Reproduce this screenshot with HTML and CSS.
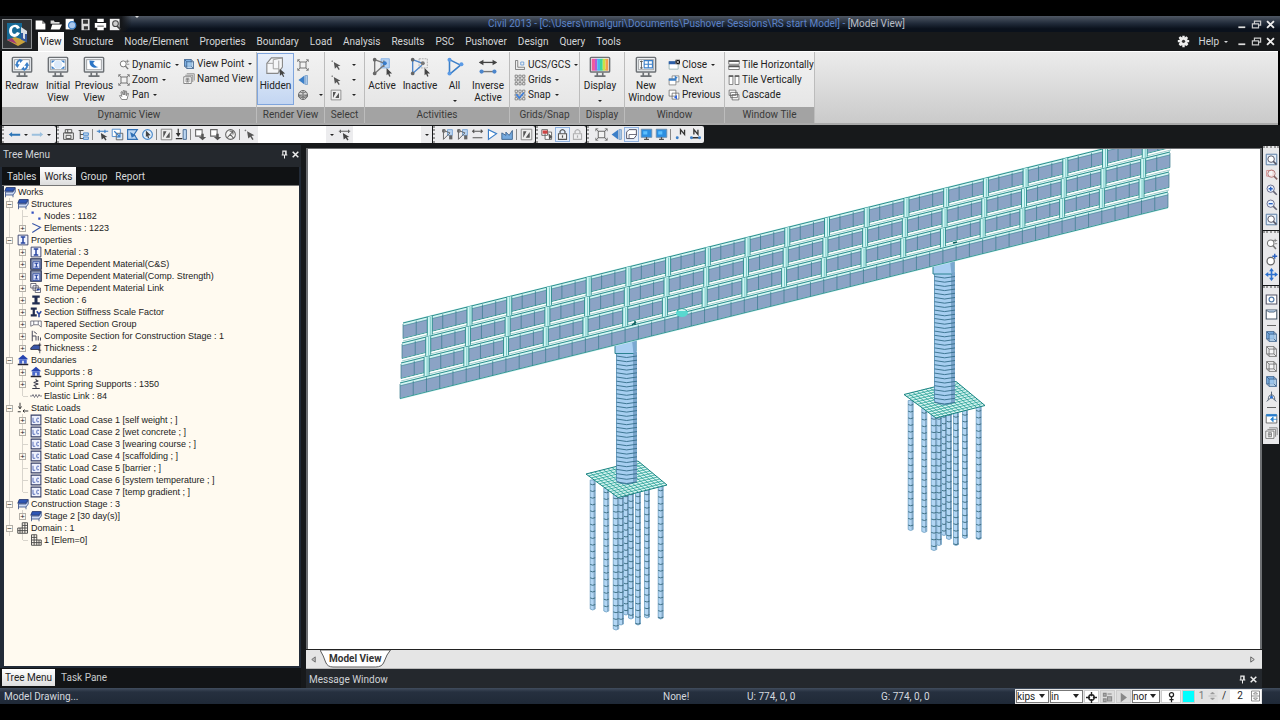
FILE: index.html
```html
<!DOCTYPE html>
<html lang="en">
<head>
<meta charset="utf-8">
<title>Civil 2013 - Model View</title>
<link rel="stylesheet" href="styles.css">
</head>
<body>
<svg class="defs" aria-hidden="true">
  <symbol id="mon" viewBox="0 0 24 24"><rect x="1.500" y="1.500" width="21" height="16" rx="1" fill="#eef1f4" stroke="#6c7074" stroke-width="1.600"/><rect x="4" y="4" width="16" height="11" fill="#fff" stroke="#9a9da0"/><path d="M9 18v3M15 18v3M6 22h12" stroke="#6c7074" stroke-width="1.800" fill="none"/></symbol>
  <symbol id="redraw" viewBox="0 0 24 24"><use href="#mon"/><path d="M10 4.500q-4 1-3.500 5.500M14 15q4-1 3.500-5.500" stroke="#3b7fc8" stroke-width="2" fill="none"/><path d="M4 9h5.500L7 13zM14.500 10.500h5.500L17.500 6.500zM9 3l4 1.500-3 3zM15 16l-4-1.500 3-3z" fill="#3b7fc8"/></symbol>
  <symbol id="initial" viewBox="0 0 24 24"><use href="#mon"/><circle cx="12" cy="9.500" r="4.500" fill="#dbeafb"/><path d="M5 8V5h4zM15 5h4v3zM5 11v3h4zM19 11v3h-4z" fill="#3b7fc8"/></symbol>
  <symbol id="previous" viewBox="0 0 24 24"><use href="#mon"/><path d="M7 5l6 .5-2 2q2 4 6 4.500-7 2.500-9.500-3z" fill="#2d76c6"/></symbol>
  <symbol id="display" viewBox="0 0 24 24"><use href="#mon"/><path d="M3 3h3.500v13H3z" fill="#f15a9c"/><path d="M6.500 3H9v13H6.500z" fill="#b45bd8"/><path d="M9 3h3v13H9z" fill="#45b8ee"/><path d="M12 3h3v13h-3z" fill="#3fd59a"/><path d="M15 3h3v13h-3z" fill="#c9e344"/><path d="M18 3h3v13h-3z" fill="#f5a04c"/></symbol>
  <symbol id="newwin" viewBox="0 0 24 24"><use href="#mon"/><path d="M10 5h9v8h-9zM10 9h9M14.500 5v8" fill="#fff" stroke="#3b7fc8" stroke-width="1.200"/><path d="M7 5v9M5.500 6h3M5.500 13h3" stroke="#555" fill="none"/></symbol>
  <symbol id="hidden" viewBox="0 0 24 24"><path d="M2 8l5-6h12v10l-5 7H2z" fill="#f5f6f8" stroke="#888" stroke-width="1.200"/><path d="M2 8h7v6h6M9 8V4l10-2M15 14v5M15 5v9" fill="none" stroke="#999"/><path d="M16 14l6 5-2.500.4 1.500 3-1.200.6-1.500-3-2 1.500z" fill="#444"/></symbol>
  <symbol id="active" viewBox="0 0 24 24"><path d="M11 3h9v10h-9z" fill="#b8d4f4" stroke="#82b0e4"/><path d="M4 3v16M4 4l11 4M4 19l10-9M14 5v7" stroke="#777" stroke-width="1.500" fill="none"/><circle cx="4" cy="4" r="2" fill="#666"/><circle cx="4" cy="19" r="2" fill="#666"/><circle cx="15" cy="8" r="2.200" fill="#377bca"/><path d="M17 13l6 6-3 .2 1.300 3-1.300.5-1.400-3-1.600 1.400z" fill="#444"/></symbol>
  <symbol id="inactive" viewBox="0 0 24 24"><path d="M11 3h9v10h-9z" fill="#eee" stroke="#aaa" stroke-dasharray="2 1"/><path d="M4 4v15M4 4l11 4M4 19l10-9" stroke="#4c86cc" stroke-width="1.500" fill="none"/><circle cx="4" cy="4" r="2" fill="#666"/><circle cx="4" cy="19" r="2" fill="#666"/><circle cx="15" cy="8" r="2.200" fill="#777"/><path d="M17 13l6 6-3 .2 1.300 3-1.300.5-1.400-3-1.600 1.400z" fill="#444"/></symbol>
  <symbol id="all" viewBox="0 0 24 24"><path d="M6 4v16M6 4l12 6M6 20L18 10" stroke="#3b7fc8" stroke-width="1.700" fill="none"/><g fill="#5b9be6"><circle cx="6" cy="4" r="2.200"/><circle cx="6" cy="19" r="2.200"/><circle cx="19" cy="9" r="2.200"/></g></symbol>
  <symbol id="inverse" viewBox="0 0 24 24"><path d="M3 7h18" stroke="#444" stroke-width="1.400"/><path d="M2 7l5-3v6zM22 7l-5-3v6z" fill="#444"/><path d="M4 17h16" stroke="#777" stroke-width="1.500"/><circle cx="5" cy="17" r="2.300" fill="#4c86cc"/><circle cx="19" cy="17" r="2.300" fill="#4c86cc"/></symbol>

  <symbol id="mag" viewBox="0 0 16 16"><circle cx="7" cy="6.500" r="4" fill="#fff" stroke="#777" stroke-width="1.300"/><path d="M10 9.500l3.500 4" stroke="#777" stroke-width="2"/></symbol>
  <symbol id="dyn" viewBox="0 0 16 16"><use href="#mag"/><path d="M10 3h5M12.500 1v4M12 7h3" stroke="#777"/></symbol>
  <symbol id="corners" viewBox="0 0 16 16"><rect x="4" y="4" width="8" height="8" fill="#f2f2f2" stroke="#666" stroke-width="1.200"/><path d="M1 1l3 3M15 1l-3 3M1 15l3-3M15 15l-3-3M1 4V1h3M12 1h3v3M1 12v3h3M12 15h3v-3" fill="none" stroke="#666"/></symbol>
  <symbol id="hand" viewBox="0 0 16 16"><path d="M5 14L2 9l1-1 2 2-1-6 1.500-.5L7 8V2h1.500l.5 6 1-5.500 1.500.5L11 9l2-3.500 1 .5-2 8z" fill="#fff" stroke="#666"/></symbol>
  <symbol id="cube" viewBox="0 0 16 16"><path d="M2 2h9v9H2z" fill="#7db0e2" stroke="#345a86"/><path d="M5 5h9v9H5z" fill="#a9ceef" fill-opacity=".7" stroke="#345a86"/><path d="M2 2l3 3M11 2l3 3M2 11l3 3M11 11l3 3" stroke="#345a86"/></symbol>
  <symbol id="cubew" viewBox="0 0 16 16"><path d="M2 2h9v9H2zM5 5h9v9H5zM2 2l3 3M11 2l3 3M2 11l3 3M11 11l3 3" fill="#fff" fill-opacity=".6" stroke="#666"/></symbol>
  <symbol id="hid" viewBox="0 0 16 16"><path d="M2 13V5l3-3h9v7l-3 4z" fill="#fff" stroke="#556" stroke-width="1.200"/><path d="M5 13V8h9" fill="none" stroke="#556"/></symbol>
  <symbol id="named" viewBox="0 0 16 16"><path d="M5 1h10v9M3 3h10v9" fill="none" stroke="#777"/><path d="M1 5h10v9H1z" fill="#fff" stroke="#666"/><path d="M4 7h4v5H4zM6 7v5M4 9h4" fill="none" stroke="#777"/></symbol>
  <symbol id="persp" viewBox="0 0 16 16"><path d="M2 8l8-6v12z" fill="#3b7fc8"/><path d="M11 2h3v12h-3z" fill="#a9c9ec" stroke="#7399c2"/></symbol>
  <symbol id="globe" viewBox="0 0 16 16"><circle cx="8" cy="8" r="6" fill="#ddd" stroke="#666" stroke-width="1.300"/><path d="M2 8q6 4 12 0M8 2v12M4 4q4 3 8 0M2 8h12v2q-6 4-12 0z" stroke="#666" fill="#999" fill-opacity=".5"/></symbol>
  <symbol id="ptr" viewBox="0 0 16 16"><path d="M2 3h2M3 2v2" stroke="#777"/><path d="M5 4l9 5-3.500.8 2.500 4-1.500.9-2.500-4L6.500 13z" fill="#555"/></symbol>
  <symbol id="selwin" viewBox="0 0 16 16"><path d="M1.500 1.500h13v13h-13z" fill="#eee" stroke="#777"/><path d="M4 4h4L4 12zM12 12V5l-5 7z" fill="#555"/></symbol>
  <symbol id="ucs" viewBox="0 0 16 16"><path d="M2 2h3v9h9v3H2z" fill="#eee" stroke="#666"/><path d="M9 4h4v4H9z" fill="none" stroke="#5b93d4"/></symbol>
  <symbol id="grid" viewBox="0 0 16 16"><path d="M1.500 1.500h3v3h-3zM6.500 1.500h3v3h-3zM11.500 1.500h3v3h-3zM1.500 6.500h3v3h-3zM6.500 6.500h3v3h-3zM11.500 6.500h3v3h-3zM1.500 11.500h3v3h-3zM6.500 11.500h3v3h-3zM11.500 11.500h3v3h-3z" fill="#fff" stroke="#666"/></symbol>
  <symbol id="snap" viewBox="0 0 16 16"><use href="#grid"/><path d="M3 7l4 5 6-7" stroke="#3b7fe0" stroke-width="2" fill="none"/></symbol>
  <symbol id="wclose" viewBox="0 0 16 16"><path d="M1.500 3.500h12v10h-12z" fill="#fff" stroke="#8aa"/><path d="M1 3h9v4H1z" fill="#2d5fa8"/><path d="M10 1h6v6h-6z" fill="#111"/><path d="M11 2l4 4M15 2l-4 4" stroke="#fff"/></symbol>
  <symbol id="wnext" viewBox="0 0 16 16"><path d="M5.500 2.500h9v8h-9z" fill="#fff" stroke="#777"/><path d="M1.500 6.500h9v8h-9z" fill="#fff" stroke="#777"/><path d="M1 6h10v3H1zM9 2l4 3-4 3z" fill="#3b7fc8"/></symbol>
  <symbol id="wprev" viewBox="0 0 16 16"><path d="M1.500 1.500h9v8h-9zM5.500 5.500h9v8h-9z" fill="#fff" stroke="#666"/><path d="M12 8v6l-4-3z" fill="#2d62e0"/></symbol>
  <symbol id="tileh" viewBox="0 0 16 16"><path d="M1 2h14v5H1zM1 9h14v5H1z" fill="#fff" stroke="#555"/><path d="M1 3h14M1 10h14" stroke="#555" stroke-width="2"/></symbol>
  <symbol id="tilev" viewBox="0 0 16 16"><path d="M1.500 2h5v12h-5zM9.500 2h5v12h-5z" fill="#fff" stroke="#666"/><path d="M1 3h6M9 3h6" stroke="#666" stroke-width="2"/></symbol>
  <symbol id="cascade" viewBox="0 0 16 16"><path d="M1.500 1.500h9v7h-9zM3.500 4.500h9v7h-9zM5.500 7.500h9v7h-9z" fill="#fff" stroke="#555"/></symbol>

  <symbol id="file" viewBox="0 0 16 16"><path d="M2 3h8l4 4v7H2z" fill="#fff"/><path d="M10 3v4h4z" fill="#888"/></symbol>
  <symbol id="folder" viewBox="0 0 16 16"><path d="M2 3h4l1 2h6v2H2z" fill="#ddd"/><path d="M4 8h12l-3 6H2z" fill="#fff"/></symbol>
  <symbol id="recent" viewBox="0 0 16 16"><path d="M2 1h10v13H2z" fill="#fff"/><circle cx="10" cy="9" r="4.500" fill="#aac7ec" stroke="#3b7fc8" stroke-width="1.500"/></symbol>
  <symbol id="save" viewBox="0 0 16 16"><path d="M3 1h10v14H3z" fill="#ddd"/><path d="M5 2h6v5H5zM6 10h5v4H6z" fill="#333"/></symbol>
  <symbol id="print" viewBox="0 0 16 16"><path d="M4 1h8v4H4zM1 6h14v6H1zM4 10h8v5H4z" fill="#fff"/><path d="M4 10h8" stroke="#222"/></symbol>
  <symbol id="preview" viewBox="0 0 16 16"><path d="M1 1h12v14H1z" fill="#eee"/><circle cx="8" cy="7" r="3.500" fill="#ccc" stroke="#444" stroke-width="1.300"/><path d="M10 10l4 4" stroke="#444" stroke-width="2"/></symbol>
  <symbol id="gear" viewBox="0 0 16 16"><path d="M6.500 1h3v2l2-1.500 2 2L12.500 6H15v3h-2.500l1.500 2.500-2 2L9.500 12.500V15h-3v-2.500L4 13.500l-2-2L3.500 9H1V6h2.500L2 3.500l2-2L6.500 3z" fill="#eee"/><circle cx="8" cy="7.700" r="2" fill="#333"/></symbol>
  <symbol id="min" viewBox="0 0 16 16"><path d="M2 12h10" stroke="#ddd" stroke-width="2.500"/></symbol>
  <symbol id="rest" viewBox="0 0 16 16"><path d="M5 6V3h9v6h-3M2 7h9v6H2z" fill="none" stroke="#ccc" stroke-width="1.700"/></symbol>
  <symbol id="x" viewBox="0 0 16 16"><path d="M3 3l10 10M13 3L3 13" stroke="#eee" stroke-width="2.700"/></symbol>
  <symbol id="pin" viewBox="0 0 16 16"><path d="M5 2h6v7H5zM3 9h10M8 9v6M10 2v7" fill="none" stroke="#eee" stroke-width="1.800"/></symbol>

  <symbol id="back" viewBox="0 0 16 16"><path d="M1 8l4-3v2h10v2.500H5V11z" fill="#2d76b8"/></symbol>
  <symbol id="fwd" viewBox="0 0 16 16"><path d="M15 8l-4-3v2H1v2.500h10V11z" fill="#9cc0de"/></symbol>
  <symbol id="s1" viewBox="0 0 16 16"><path d="M2 6h12v8H2zM4 2h8v4H4zM5 9h6v4H5zM7 2v4" fill="#eee" stroke="#555" stroke-width="1.200"/></symbol>
  <symbol id="s2" viewBox="0 0 16 16"><path d="M2 3h6M4 3v10h4M4 8h4" fill="none" stroke="#555" stroke-width="1.300"/><path d="M8 6h6v3H8zM8 11h6v3H8z" fill="#bcd6f2" stroke="#3b7fc8"/></symbol>
  <symbol id="s3" viewBox="0 0 16 16"><path d="M1 4h14M4 2v4M11 2v4" stroke="#3b7fc8" stroke-width="1.400"/><path d="M6 6l8 5-3 .5 2 3-1.500.8-2-3L7 14z" fill="#444"/></symbol>
  <symbol id="s3k" viewBox="0 0 16 16"><path d="M1 4h14M3 2v4M13 2v4" stroke="#666" stroke-width="1.400"/><path d="M6 6l8 5-3 .5 2 3-1.500.8-2-3L7 14z" fill="#444"/></symbol>
  <symbol id="s4" viewBox="0 0 16 16"><path d="M1.500 1.500h10v9h-10z" fill="#fff" stroke="#3b7fc8"/><path d="M6.500 6.500h8v8h-8z" fill="#d9e8f8" stroke="#555"/><path d="M4 4l7 7M11 7v4H7" stroke="#3b7fc8" stroke-width="1.500" fill="none"/></symbol>
  <symbol id="s5" viewBox="0 0 16 16"><path d="M2 2h12l-4 6 4 6H2z" fill="#bcd6f2" stroke="#3170b5" stroke-width="1.400"/><path d="M5 5l7 4-5 3z" fill="#3170b5"/></symbol>
  <symbol id="s6" viewBox="0 0 16 16"><circle cx="8" cy="8" r="6" fill="#e5f0fb" stroke="#4b8acb" stroke-width="1.400"/><path d="M6 3l6 6-3 .3 1 3-1.300.4-1.200-3L6 11z" fill="#444"/></symbol>
  <symbol id="s7" viewBox="0 0 16 16"><path d="M4 1v7M1 13h8" stroke="#333" stroke-width="1.500"/><path d="M1 6h6l-3 5z" fill="#333"/><path d="M10 2h4v12h-4z" fill="#bcd6f2" stroke="#345a86"/></symbol>
  <symbol id="s8" viewBox="0 0 16 16"><path d="M2 2h8v8H2z" fill="#fff" stroke="#666" stroke-width="1.300"/><path d="M9 7h3v4h3l-4.500 4L6 11h3z" fill="#555"/></symbol>
  <symbol id="s9" viewBox="0 0 16 16"><circle cx="8" cy="8" r="6" fill="#f4f4f4" stroke="#666" stroke-width="1.300"/><path d="M4 12l7-8M7 4h4v4M8 8l4 5" stroke="#666" stroke-width="1.400" fill="none"/></symbol>
  <symbol id="a1" viewBox="0 0 16 16"><path d="M8 2h6v7H8z" fill="#bcd6f2" stroke="#6c9dd2"/><path d="M3 2v12M3 3l8 3-8 8M2 2h3v3H2z" fill="none" stroke="#666" stroke-width="1.200"/><path d="M10 9h4v5h-4z" fill="#666"/></symbol>
  <symbol id="a3" viewBox="0 0 16 16"><path d="M2 4h12M4 2L2 4l2 2M12 2l2 2-2 2M2 12h12" fill="none" stroke="#555" stroke-width="1.400"/></symbol>
  <symbol id="a4" viewBox="0 0 16 16"><path d="M3 2v12L13 7z" fill="#fff" stroke="#3b7fc8" stroke-width="1.400"/></symbol>
  <symbol id="a5" viewBox="0 0 16 16"><path d="M1 14V6l5 3V5l4 4 4-6v11z" fill="#75a9de" stroke="#345a86"/></symbol>
  <symbol id="a6" viewBox="0 0 16 16"><path d="M1 2h7v7H1zM5 5h8v9H5z" fill="#fff" stroke="#555"/><path d="M2 3h6v4H2z" fill="#d04444"/><path d="M9 6l5 5-4 3z" fill="#555"/></symbol>
  <symbol id="lock" viewBox="0 0 16 16"><path d="M5 7V4q3-4 6 0v3" fill="none" stroke="#555" stroke-width="1.500"/><path d="M3 7h10v7H3z" fill="#f3f3f3" stroke="#555" stroke-width="1.300"/><path d="M8 9v3" stroke="#555" stroke-width="1.500"/></symbol>
  <symbol id="scr" viewBox="0 0 16 16"><path d="M1.500 1.500h13v10h-13z" fill="#2c8ee0" stroke="#6f8ca8"/><path d="M5 14h6M8 11v3" stroke="#555" stroke-width="1.500"/><path d="M4 4h5v4H4z" fill="#5cc0ff"/></symbol>
  <symbol id="nodeN" viewBox="0 0 16 16"><path d="M8 8V2l5 6V2" fill="none" stroke="#333" stroke-width="1.600"/><circle cx="4" cy="12" r="1.800" fill="#3b7fc8"/></symbol>
  <symbol id="elemN" viewBox="0 0 16 16"><path d="M6 8V2l5 6V2M3 12h10" fill="none" stroke="#333" stroke-width="1.600"/><circle cx="3" cy="12" r="1.800" fill="#3b7fc8"/><circle cx="13" cy="12" r="1.800" fill="#3b7fc8"/></symbol>

  <symbol id="zfit" viewBox="0 0 16 16"><path d="M1.500 1.500h13v13h-13z" fill="#e2ecf7" stroke="#5c7ea6" stroke-width="1.200"/><circle cx="7.500" cy="7.500" r="4" fill="#fff" stroke="#556" stroke-width="1.200"/><path d="M10 10l4 4" stroke="#556" stroke-width="1.800"/></symbol>
  <symbol id="zwin" viewBox="0 0 16 16"><path d="M2 3h8v7H2z" fill="none" stroke="#d08080"/><circle cx="8" cy="7" r="4.500" fill="#fff" fill-opacity=".5" stroke="#a66"/><path d="M11 10l4 4" stroke="#866" stroke-width="2"/></symbol>
  <symbol id="zin" viewBox="0 0 16 16"><circle cx="7" cy="7" r="4.500" fill="#eaf3ff" stroke="#557"/><path d="M4.500 7h5M7 4.500v5" stroke="#2d62c0" stroke-width="1.700"/><path d="M10 10l4.500 4.500" stroke="#667" stroke-width="2"/></symbol>
  <symbol id="zout" viewBox="0 0 16 16"><circle cx="7" cy="7" r="4.500" fill="#eaf3ff" stroke="#557"/><path d="M4.500 7h5" stroke="#2d62c0" stroke-width="1.700"/><path d="M10 10l4.500 4.500" stroke="#667" stroke-width="2"/></symbol>
  <symbol id="rot" viewBox="0 0 16 16"><circle cx="7" cy="10" r="4.500" fill="#fff" stroke="#666" stroke-width="1.500"/><path d="M9 4h6M12 1v6" stroke="#2d62c0" stroke-width="1.700"/></symbol>
  <symbol id="move" viewBox="0 0 16 16"><path d="M8 0l3 4H9v3h3V5l4 3-4 3V9H9v3h2l-3 4-3-4h2V9H4v2L0 8l4-3v2h3V4H5z" fill="#2d72d0"/></symbol>
  <symbol id="spin" viewBox="0 0 16 16"><path d="M1.500 2.500h13v11h-13z" fill="#fff" stroke="#556" stroke-width="1.300"/><circle cx="8" cy="8" r="3" fill="none" stroke="#557ba8" stroke-width="1.500"/></symbol>
  <symbol id="init" viewBox="0 0 16 16"><path d="M1.500 2.500h13v11h-13z" fill="#fff" stroke="#456" stroke-width="1.300"/><path d="M2 3l3 2h6l3-2" fill="#a9c9ec" stroke="#456"/></symbol>
  <symbol id="axis" viewBox="0 0 16 16"><path d="M8 2v7M8 9l-6 5M8 9l6 5M4 12q0-6 4-6t4 6" fill="none" stroke="#567" stroke-width="1.200"/><circle cx="8" cy="9" r="1.800" fill="#2d72d0"/></symbol>
  <symbol id="wadd" viewBox="0 0 16 16"><path d="M1.500 3.500h13v10h-13z" fill="#fff" stroke="#555"/><path d="M2 3h12v2H2zM7 9h8M7 9l3-3v6z" fill="#2d72d0" stroke="#2d8ad0"/></symbol>

  <symbol id="stack" viewBox="0 0 16 16"><path d="M3 2h12l-3 5H1z" fill="#2e56b4" stroke="#1c2f66"/><path d="M2 8h10l3-5v5l-3 4H2zM2 12v3M12 12v3" fill="#cfdaf2" stroke="#24407f"/></symbol>
  <symbol id="tnodes" viewBox="0 0 16 16"><path d="M2 2h3v3H2zM11 10h3v3h-3z" fill="#3350c0"/></symbol>
  <symbol id="telem" viewBox="0 0 16 16"><path d="M3 2l11 5-11 7" fill="none" stroke="#3a57a8" stroke-width="1.500"/></symbol>
  <symbol id="tI" viewBox="0 0 16 16"><path d="M1.500 1.500h13v13h-13z" fill="#f4f6ff" stroke="#333c66" stroke-width="1.200"/><path d="M5 4h6M5 12h6M8 4v8" stroke="#2744a0" stroke-width="2"/></symbol>
  <symbol id="tId" viewBox="0 0 16 16"><path d="M1 1h14v14H1z" fill="#8f9ab5" stroke="#222c50" stroke-width="1.500"/><path d="M4 5h9v9H4z" fill="#e2e7fb" stroke="#2744a0"/><path d="M6 7h5M6 12h5M8.500 7v5" stroke="#2744a0" stroke-width="1.500"/></symbol>
  <symbol id="tlink" viewBox="0 0 16 16"><path d="M1 2h7v6H1zM4 5h7v6H4zM7 8h7v6H7z" fill="#fff" stroke="#445"/><path d="M9 10h4" stroke="#2744a0" stroke-width="2"/></symbol>
  <symbol id="tsec" viewBox="0 0 16 16"><path d="M3 2h10v3H10v6h3v3H3v-3h3V5H3z" fill="#202c50"/></symbol>
  <symbol id="tsecy" viewBox="0 0 16 16"><path d="M1 2h8v3H6.500v6H9v3H1v-3h2.500V5H1z" fill="#202c50"/><path d="M9 7l3 4 3-4M12 11v4" fill="none" stroke="#2744a0" stroke-width="2"/></symbol>
  <symbol id="ttap" viewBox="0 0 16 16"><path d="M1 4h14v8l-4-3H5l-4 2z" fill="#fff" stroke="#556"/><path d="M5 4v5M11 4v5" stroke="#556"/></symbol>
  <symbol id="tcomp" viewBox="0 0 16 16"><path d="M3 1v14M3 8h5v6M11 8v6M14 10v4M5 2l4 3" fill="none" stroke="#445" stroke-width="1.300"/></symbol>
  <symbol id="tthick" viewBox="0 0 16 16"><path d="M1 8l4-4h8v6H1z" fill="#3a57a8" stroke="#223"/><path d="M13 1v4M13 15v-5M11 4h4M11 11h4" stroke="#223"/></symbol>
  <symbol id="thouse" viewBox="0 0 16 16"><path d="M8 1l7 6H1z" fill="#2744b0"/><path d="M3 7h10v6H3z" fill="#4a68cc"/><path d="M7 9h2v5H7z" fill="#fff"/><path d="M1 14h14" stroke="#223" stroke-width="2"/></symbol>
  <symbol id="tspring" viewBox="0 0 16 16"><path d="M8 1v2l3 1-6 2 6 2-6 2 3 1v3M3 14h10" fill="none" stroke="#334" stroke-width="1.300"/></symbol>
  <symbol id="telas" viewBox="0 0 16 16"><path d="M0 8h3l1-2 2 4 2-4 2 4 2-4 1 2h3" fill="none" stroke="#556"/></symbol>
  <symbol id="tload" viewBox="0 0 16 16"><path d="M4 1v8M2 6l2 3 2-3M1 13h4M8 12h7M10 10l-2 2 2 2" fill="none" stroke="#333" stroke-width="1.300"/></symbol>
  <symbol id="tlc" viewBox="0 0 16 16"><path d="M1.500 1.500h13v13h-13z" fill="#eef1fc" stroke="#333c66" stroke-width="1.400"/><path d="M4 5v6h3M12 6q-3-2-3 2t3 2" fill="none" stroke="#4a63b4" stroke-width="1.200"/></symbol>
  <symbol id="tdom" viewBox="0 0 16 16"><path d="M1 8h6V1h7v14H1zM7 8h7M4 8v7M1 11.500h13M10.500 1v14M7 4.500h7M7 8v7" fill="none" stroke="#444" stroke-width="1.200"/></symbol>
  <symbol id="tdom1" viewBox="0 0 16 16"><path d="M2 1h7v7h6v7H2zM2 4.500h7M2 8h7M2 11.500h13M5.500 1v14M9 8v7M12 8v7" fill="none" stroke="#444" stroke-width="1.200"/></symbol>
</svg>

<header class="titlebar">
  <div class="quick">
    <button aria-label="New"><svg><use href="#file"/></svg></button><button aria-label="Open"><svg><use href="#folder"/></svg></button><button aria-label="Recent"><svg><use href="#recent"/></svg></button><button aria-label="Save"><svg><use href="#save"/></svg></button><button aria-label="Print"><svg><use href="#print"/></svg></button><button aria-label="Preview"><svg><use href="#preview"/></svg></button>
  </div>
  <button class="more" aria-label="Customize"><i class="car"></i></button>
  <h1>Civil 2013 - [C:\Users\nmalguri\Documents\Pushover Sessions\RS start Model] - <b>[Model View]</b></h1>
  <div class="wctl"><button aria-label="Minimize"><svg><use href="#min"/></svg></button><button aria-label="Restore"><svg><use href="#rest"/></svg></button><button aria-label="Close"><svg><use href="#x"/></svg></button></div>
  <button class="app" aria-label="Application menu"><svg viewBox="0 0 30 30"><rect x=".5" y=".5" width="29" height="29" fill="#303336" stroke="#8c8f92"/><path d="M5 4h15v17H5z" fill="#176a96"/><path d="M19 8l6 4v9l-6-2z" fill="#d7dde2"/><path d="M5 21l8-3 12 4-9 5z" fill="#c9a23c"/><path d="M5 21l5-2 5 6z" fill="#a03a78"/><path d="M18 9q-2-4-6-3-5 1-5 6t5 6q4 0 6-4l-3-1q-1 2-3 2-2-1-2-3 0-4 3-4 1 0 2 2z" fill="#fff"/><path d="M20 14v6l4 2v-7" fill="none" stroke="#33589c" stroke-width="2"/></svg></button>
</header>

<nav class="menu">
  <button class="on">View</button><button>Structure</button><button>Node/Element</button><button>Properties</button><button>Boundary</button><button>Load</button><button>Analysis</button><button>Results</button><button>PSC</button><button>Pushover</button><button>Design</button><button>Query</button><button>Tools</button>
  <div class="help"><button aria-label="Options"><svg><use href="#gear"/></svg></button><button>Help <i class="car"></i></button></div>
  <div class="wctl"><button aria-label="Minimize view"><svg><use href="#min"/></svg></button><button aria-label="Restore view"><svg><use href="#rest"/></svg></button><button aria-label="Close view"><svg><use href="#x"/></svg></button></div>
</nav>

<section class="ribbon">
  <div class="grp g-dyn"><div class="body">
    <button class="big"><svg><use href="#redraw"/></svg>Redraw</button>
    <button class="big"><svg><use href="#initial"/></svg>Initial<br>View</button>
    <button class="big"><svg><use href="#previous"/></svg>Previous<br>View</button>
    <div class="col"><button><svg><use href="#dyn"/></svg>Dynamic<i class="car"></i></button><button><svg><use href="#corners"/></svg>Zoom<i class="car"></i></button><button><svg><use href="#hand"/></svg>Pan<i class="car"></i></button></div>
    <div class="col"><button><svg><use href="#cube"/></svg>View Point<i class="car"></i></button><button><svg><use href="#named"/></svg>Named View</button></div>
  </div><h2>Dynamic View</h2></div>
  <div class="grp g-ren"><div class="body">
    <button class="big sel"><svg><use href="#hidden"/></svg>Hidden</button>
    <div class="col"><button aria-label="Shrink"><svg><use href="#corners"/></svg></button><button aria-label="Perspective"><svg><use href="#persp"/></svg></button><button aria-label="Render"><svg><use href="#globe"/></svg><i class="car far"></i></button></div>
  </div><h2>Render View</h2></div>
  <div class="grp g-sel"><div class="body">
    <div class="col"><button aria-label="Select"><svg><use href="#ptr"/></svg><i class="car far"></i></button><button aria-label="Unselect"><svg><use href="#ptr"/></svg><i class="car far"></i></button><button aria-label="Select window"><svg><use href="#selwin"/></svg><i class="car far"></i></button></div>
  </div><h2>Select</h2></div>
  <div class="grp g-act"><div class="body">
    <button class="big"><svg><use href="#active"/></svg>Active</button>
    <button class="big"><svg><use href="#inactive"/></svg>Inactive</button>
    <button class="big"><svg><use href="#all"/></svg>All<i class="car"></i></button>
    <button class="big"><svg><use href="#inverse"/></svg>Inverse<br>Active</button>
  </div><h2>Activities</h2></div>
  <div class="grp g-grid"><div class="body">
    <div class="col"><button><svg><use href="#ucs"/></svg>UCS/GCS<i class="car"></i></button><button><svg><use href="#grid"/></svg>Grids<i class="car"></i></button><button><svg><use href="#snap"/></svg>Snap<i class="car"></i></button></div>
  </div><h2>Grids/Snap</h2></div>
  <div class="grp g-dis"><div class="body"><button class="big"><svg><use href="#display"/></svg>Display<i class="car"></i></button></div><h2>Display</h2></div>
  <div class="grp g-win"><div class="body">
    <button class="big"><svg><use href="#newwin"/></svg>New<br>Window</button>
    <div class="col"><button><svg><use href="#wclose"/></svg>Close<i class="car"></i></button><button><svg><use href="#wnext"/></svg>Next</button><button><svg><use href="#wprev"/></svg>Previous</button></div>
  </div><h2>Window</h2></div>
  <div class="grp g-tile"><div class="body">
    <div class="col"><button><svg><use href="#tileh"/></svg>Tile Horizontally</button><button><svg><use href="#tilev"/></svg>Tile Vertically</button><button><svg><use href="#cascade"/></svg>Cascade</button></div>
  </div><h2>Window Tile</h2></div>
</section>

<section class="tools">
  <div class="bar nav"><button aria-label="Undo"><svg><use href="#back"/></svg></button><i class="car"></i><button aria-label="Redo"><svg><use href="#fwd"/></svg></button><i class="car"></i></div>
  <div class="bar pick"><button aria-label="Group"><svg><use href="#s1"/></svg></button><button aria-label="Tree"><svg><use href="#s2"/></svg></button><hr><button aria-label="Select single"><svg><use href="#s3"/></svg></button><button aria-label="Select window"><svg><use href="#s4"/></svg></button><button aria-label="Select polygon"><svg><use href="#s5"/></svg></button><button aria-label="Select circle"><svg><use href="#s6"/></svg></button><hr><button aria-label="Intersect"><svg><use href="#selwin"/></svg></button><button aria-label="Plane"><svg><use href="#s7"/></svg></button><hr><button aria-label="Previous selection"><svg><use href="#s8"/></svg></button><button aria-label="Recent entities"><svg><use href="#s8"/></svg></button><button aria-label="Unselect all"><svg><use href="#s9"/></svg></button><hr><button aria-label="Node pick"><svg><use href="#ptr"/></svg></button><span class="combo"><select aria-label="Node list"><option></option></select><i class="car"></i></span><button aria-label="Element pick"><svg><use href="#s3k"/></svg></button><span class="combo"><select aria-label="Element list"><option></option></select><i class="car"></i></span></div>
  <div class="bar"><button aria-label="Activate"><svg><use href="#a1"/></svg></button><button aria-label="Inactivate"><svg><use href="#a1"/></svg></button><button aria-label="Inverse"><svg><use href="#a3"/></svg></button><button aria-label="Activate all"><svg><use href="#a4"/></svg></button><button aria-label="Activate stage"><svg><use href="#a5"/></svg></button><hr><button aria-label="Previous"><svg><use href="#selwin"/></svg></button></div>
  <div class="bar locks"><button aria-label="Regenerate"><svg><use href="#a6"/></svg></button><button class="on" aria-label="Lock"><svg><use href="#lock"/></svg></button><button class="dim" aria-label="Unlock"><svg><use href="#lock"/></svg></button></div>
  <div class="bar"><button aria-label="Shrink"><svg><use href="#corners"/></svg></button><button aria-label="Perspective"><svg><use href="#persp"/></svg></button><button class="on" aria-label="Hidden"><svg><use href="#hid"/></svg></button><button aria-label="Display"><svg><use href="#scr"/></svg></button><button aria-label="Display option"><svg><use href="#scr"/></svg></button><hr><button aria-label="Node number"><svg><use href="#nodeN"/></svg></button><button aria-label="Element number"><svg><use href="#elemN"/></svg></button></div>
</section>

<main>
  <aside>
    <header class="phead"><h2>Tree Menu</h2><button aria-label="Pin"><svg><use href="#pin"/></svg></button><button aria-label="Close panel"><svg><use href="#x"/></svg></button></header>
    <div class="ptabs"><button>Tables</button><button class="on">Works</button><button>Group</button><button>Report</button></div>
    <div class="tree">
      <div class="row root"><svg><use href="#stack"/></svg>Works</div>
      <ul class="l1">
        <li><div class="row"><button class="ex" aria-label="Collapse">−</button><svg><use href="#stack"/></svg>Structures</div>
          <ul><li class="row"><i class="ln"></i><svg><use href="#tnodes"/></svg>Nodes : 1182</li><li class="row"><button class="ex" aria-label="Expand">+</button><svg><use href="#telem"/></svg>Elements : 1223</li></ul></li>
        <li><div class="row"><button class="ex" aria-label="Collapse">−</button><svg><use href="#tI"/></svg>Properties</div>
          <ul><li class="row"><button class="ex" aria-label="Expand">+</button><svg><use href="#tI"/></svg>Material : 3</li><li class="row"><button class="ex" aria-label="Expand">+</button><svg><use href="#tId"/></svg>Time Dependent Material(C&amp;S)</li><li class="row"><button class="ex" aria-label="Expand">+</button><svg><use href="#tId"/></svg>Time Dependent Material(Comp. Strength)</li><li class="row"><button class="ex" aria-label="Expand">+</button><svg><use href="#tlink"/></svg>Time Dependent Material Link</li><li class="row"><button class="ex" aria-label="Expand">+</button><svg><use href="#tsec"/></svg>Section : 6</li><li class="row"><button class="ex" aria-label="Expand">+</button><svg><use href="#tsecy"/></svg>Section Stiffness Scale Factor</li><li class="row"><button class="ex" aria-label="Expand">+</button><svg><use href="#ttap"/></svg>Tapered Section Group</li><li class="row"><button class="ex" aria-label="Expand">+</button><svg><use href="#tcomp"/></svg>Composite Section for Construction Stage : 1</li><li class="row"><button class="ex" aria-label="Expand">+</button><svg><use href="#tthick"/></svg>Thickness : 2</li></ul></li>
        <li><div class="row"><button class="ex" aria-label="Collapse">−</button><svg><use href="#thouse"/></svg>Boundaries</div>
          <ul><li class="row"><button class="ex" aria-label="Expand">+</button><svg><use href="#thouse"/></svg>Supports : 8</li><li class="row"><button class="ex" aria-label="Expand">+</button><svg><use href="#tspring"/></svg>Point Spring Supports : 1350</li><li class="row"><i class="ln"></i><svg><use href="#telas"/></svg>Elastic Link : 84</li></ul></li>
        <li><div class="row"><button class="ex" aria-label="Collapse">−</button><svg><use href="#tload"/></svg>Static Loads</div>
          <ul><li class="row"><button class="ex" aria-label="Expand">+</button><svg><use href="#tlc"/></svg>Static Load Case 1 [self weight ; ]</li><li class="row"><button class="ex" aria-label="Expand">+</button><svg><use href="#tlc"/></svg>Static Load Case 2 [wet concrete ; ]</li><li class="row"><i class="ln"></i><svg><use href="#tlc"/></svg>Static Load Case 3 [wearing course ; ]</li><li class="row"><button class="ex" aria-label="Expand">+</button><svg><use href="#tlc"/></svg>Static Load Case 4 [scaffolding ; ]</li><li class="row"><i class="ln"></i><svg><use href="#tlc"/></svg>Static Load Case 5 [barrier ; ]</li><li class="row"><i class="ln"></i><svg><use href="#tlc"/></svg>Static Load Case 6 [system temperature ; ]</li><li class="row"><i class="ln"></i><svg><use href="#tlc"/></svg>Static Load Case 7 [temp gradient ; ]</li></ul></li>
        <li><div class="row"><button class="ex" aria-label="Collapse">−</button><svg><use href="#stack"/></svg>Construction Stage : 3</div>
          <ul><li class="row"><button class="ex" aria-label="Expand">+</button><svg><use href="#stack"/></svg>Stage 2 [30 day(s)]</li></ul></li>
        <li><div class="row"><button class="ex" aria-label="Collapse">−</button><svg><use href="#tdom"/></svg>Domain : 1</div>
          <ul><li class="row"><i class="ln"></i><svg><use href="#tdom1"/></svg>1 [Elem=0]</li></ul></li>
      </ul>
    </div>
    <div class="btabs"><button class="on">Tree Menu</button><button>Task Pane</button></div>
  </aside>
  <section class="work">
    <div class="view"><svg id="model" viewBox="308 149 952 500" role="img" aria-label="Bridge model"></svg></div>
    <div class="vtabs"><button class="arr" aria-label="Scroll left"><svg viewBox="0 0 8 8"><path d="M6 1L2 4l4 3z" fill="#bbb" stroke="#666"/></svg></button><button class="vtab"><svg viewBox="0 0 76 18" preserveAspectRatio="none"><path d="M0 0Q4 6 6 12Q8 17 14 17H60Q67 17 69 12Q72 4 76 0z" fill="#fff" stroke="#555"/></svg><span>Model View</span></button><button class="arr end" aria-label="Scroll right"><svg viewBox="0 0 8 8"><path d="M2 1l4 3-4 3z" fill="#ddd" stroke="#555"/></svg></button></div>
    <header class="phead"><h2>Message Window</h2><button aria-label="Pin messages"><svg><use href="#pin"/></svg></button><button aria-label="Close messages"><svg><use href="#x"/></svg></button></header>
  </section>
  <div class="side">
    <div class="vbar"><button aria-label="Zoom fit"><svg><use href="#zfit"/></svg></button><button aria-label="Zoom window"><svg><use href="#zwin"/></svg></button><button aria-label="Zoom in"><svg><use href="#zin"/></svg></button><button aria-label="Zoom out"><svg><use href="#zout"/></svg></button><button aria-label="Auto fit"><svg><use href="#zfit"/></svg></button></div>
    <div class="vbar"><button aria-label="Zoom dynamic"><svg><use href="#dyn"/></svg></button><button aria-label="Rotate"><svg><use href="#rot"/></svg></button><button aria-label="Pan"><svg><use href="#move"/></svg></button></div>
    <div class="vbar"><button aria-label="Redraw"><svg><use href="#spin"/></svg></button><button aria-label="Initial view"><svg><use href="#init"/></svg></button><hr><button aria-label="Iso view"><svg><use href="#cube"/></svg></button><button aria-label="Top view"><svg><use href="#cubew"/></svg></button><button aria-label="Left view"><svg><use href="#cubew"/></svg></button><button aria-label="Front view"><svg><use href="#cube"/></svg></button><button aria-label="Angle view"><svg><use href="#axis"/></svg></button><hr><button aria-label="Add view"><svg><use href="#wadd"/></svg></button><button aria-label="Named view"><svg><use href="#named"/></svg></button></div>
  </div>
</main>

<footer>
  <span class="msg">Model Drawing...</span><span class="c1">None!</span><span class="c2">U: 774, 0, 0</span><span class="c2">G: 774, 0, 0</span>
  <div class="units">
    <span class="drop w1"><select aria-label="Force unit"><option>kips</option></select><i></i></span>
    <span class="drop w1"><select aria-label="Length unit"><option>in</option></select><i></i></span>
    <button aria-label="Snap"><svg viewBox="0 0 16 16"><circle cx="8" cy="8" r="4" fill="none" stroke="#222" stroke-width="2"/><path d="M8 0v6M8 10v6M0 8h6M10 8h6" stroke="#222" stroke-width="2"/></svg></button>
    <button class="off" aria-label="Step"><svg viewBox="0 0 16 16"><path d="M2 2h4v4H2zM2 10h4v4H2zM8 3h6M8 7h6v6H8z" fill="#aaa" stroke="#888" stroke-width="1.500"/></svg></button>
    <button class="off" aria-label="Play"><svg viewBox="0 0 16 16"><path d="M4 1l9 7-9 7z" fill="#888"/></svg></button>
    <span class="drop w2"><select aria-label="Filter"><option>nor</option></select><i></i></span>
    <button class="key" aria-label="Query"><svg viewBox="0 0 16 16"><circle cx="8" cy="4" r="3" fill="none" stroke="#222" stroke-width="1.800"/><path d="M8 7v3M5 11h6M8 12v3" stroke="#222" stroke-width="1.800"/></svg></button>
    <button class="sw" aria-label="Colour"></button>
    <span class="num off"><input aria-label="Current page" value="1" disabled><svg viewBox="0 0 8 12"><path d="M2 4l2-2 2 2zM2 8l2 2 2-2zM0 6h8" fill="#999" stroke="#999" stroke-width=".5"/></svg></span>
    <b>/</b>
    <span class="num"><input aria-label="Page count" value="2"><svg viewBox="0 0 8 12"><path d="M2 4l2-2 2 2zM2 8l2 2 2-2zM0 6h8M0 1v10h8V1z" fill="none" stroke="#666" stroke-width=".7"/></svg></span>
  </div>
</footer>
<script src="model.js"></script>
</body>
</html>
```
FILE: styles.css
```css
* { box-sizing: border-box; }
body { margin: 0; min-height: 100vh; padding: 16px 0; background: #000; display: flex; flex-direction: column; font: 10px/12px Roboto, "Noto Sans", sans-serif; color: #222; overflow-x: hidden; }
button, select, input { font: inherit; color: inherit; margin: 0; padding: 0; border: 0; background: none; }
h1, h2 { margin: 0; font: inherit; }
ul { margin: 0; padding: 0; list-style: none; }
svg { width: 13px; height: 13px; display: block; flex: none; }
.defs { position: absolute; width: 0; height: 0; }
.car { width: 0; height: 0; flex: none; border: 2px solid transparent; border-top-color: currentColor; border-bottom: 0; }

.titlebar { position: relative; height: 16px; display: flex; align-items: center; background: linear-gradient(#4f5763, #222c3b 45%, #0a111c 80%); color: #5c83c8; }
.quick { display: flex; align-items: center; height: 16px; padding: 0 10px 0 34px; background: linear-gradient(90deg, #15171a 92%, transparent); border-radius: 0 0 12px 0; gap: 2px; }
.more { color: #ddd; width: 10px; }
h1 { flex: 1; text-align: center; white-space: nowrap; padding-left: 14px; }
h1 b { font-weight: 400; color: #b9bec6; }
.wctl { display: flex; gap: 3px; padding-right: 4px; }
.wctl svg { width: 11px; height: 11px; }
.app { position: absolute; left: 2px; top: 3px; z-index: 2; }
.app svg { width: 30px; height: 30px; }

.menu { display: flex; align-items: stretch; height: 19px; padding-left: 38px; background: #17191b; color: #d4d6d8; }
.menu > button { padding: 1px 6px 0 5px; }
.menu > button.on { background: linear-gradient(#fff, #eee); color: #222; padding: 1px 2px 0; margin-right: 4px; }
.help { margin-left: auto; display: flex; align-items: center; gap: 9px; padding-right: 9px; }
.help button { display: flex; align-items: center; gap: 5px; }
.help + .wctl { align-items: center; }

.ribbon { display: flex; height: 74px; margin: 0 2px; background: linear-gradient(#ececec, #cacaca); border-top: 1px solid #fff; border-bottom: 2px solid #aaa; }
.grp { display: flex; flex-direction: column; background: linear-gradient(#f2f2f2, #e2e2e2); border-right: 1px solid #bcbcbc; flex: none; }
.grp h2 { margin-top: auto; height: 16px; line-height: 15px; text-align: center; background: #a3a3a3; color: #3a3a3a; }
.body { display: flex; height: 54px; padding-top: 4px; align-items: flex-start; }
.big { display: flex; flex-direction: column; align-items: center; white-space: nowrap; text-align: center; flex: none; }
.big svg { width: 22px; height: 22px; margin-bottom: 2px; }
.big .car { margin-top: 8px; }
.col { display: flex; flex-direction: column; padding-top: 1px; }
.col button { display: flex; align-items: center; height: 15px; gap: 2px; white-space: nowrap; }
.col svg { width: 12px; height: 12px; }
.col .car { margin-left: 2px; }
.col .far { margin-left: 8px; }
.g-dyn { width: 255px; } .g-ren { width: 68px; } .g-sel { width: 40px; } .g-act { width: 145px; }
.g-grid { width: 70px; } .g-dis { width: 45px; } .g-win { width: 100px; } .g-tile { width: 90px; }
.g-dyn .big { width: 36px; }
.g-dyn .body { padding-left: 2px; }
.g-dyn .col { margin-left: 6px; width: 61px; }
.g-dyn .col + .col { margin-left: 4px; padding-top: 0; }
.big.sel { width: 37px; height: 52px; background: linear-gradient(#e9f0fb, #c3d6f2); border: 1px solid #7fa5dd; }
.g-ren .body { padding-top: 1px; }
.g-ren .sel { padding-top: 2px; }
.g-ren .col { padding: 4px 0 0 3px; }
.g-sel .col { padding-left: 5px; }
.g-act .big { width: 34px; }
.g-act .big:nth-child(2) { width: 42px; }
.g-act .big:nth-child(3) { width: 27px; }
.g-act .big:nth-child(4) { width: 40px; }
.g-grid .col { padding-left: 4px; }
.g-dis .big { width: 40px; }
.g-win .big { width: 42px; }
.g-win .col { padding-left: 1px; }
.g-tile .col { padding-left: 3px; }

.tools { display: flex; height: 20px; padding: 1px 0 0 2px; background: #17191b; gap: 1px; }
.bar { display: flex; align-items: center; height: 17px; background: #ececee; padding: 0 1px 0 5px; border-radius: 0 2px 2px 0; border-left: 2px dotted #999; flex: none; }
.bar button { width: 15px; height: 15px; padding: 1px; flex: none; }
.bar button.on { background: #e4eefb; outline: 1px solid #8fb2e0; outline-offset: -1px; }
.bar .dim { opacity: .4; }
.bar hr { width: 1px; height: 11px; margin: 0 2px 0 1px; border: 0; background: #888; }
.bar.nav { width: 54px; gap: 1px; padding: 0 0 0 2px; }
.bar.nav button { width: 17px; padding: 1px 2px; }
.bar.pick { padding: 0 0 0 2px; }
.bar.locks { padding-left: 2px; }
.combo { display: flex; align-items: center; width: 79px; height: 17px; background: linear-gradient(90deg, #fff 68px, #ececee 68px); margin-left: 1px; }
.combo select { flex: 1; appearance: none; height: 17px; min-width: 0; }
.combo .car { margin: 0 3px; }

main { flex: 1; display: flex; background: #17191b; min-height: 0; }
aside { width: 301px; display: flex; flex-direction: column; background: #222b38; flex: none; }
.phead { display: flex; align-items: center; height: 19px; padding: 2px 4px 0 3px; gap: 2px; background: #24282d; color: #cfd2d6; flex: none; }
.phead h2 { flex: 1; }
.phead svg { width: 9px; height: 9px; }
aside .phead { height: 22px; padding: 0 1px 3px 3px; }
.ptabs { display: flex; height: 19px; margin: 0 2px; padding-left: 1px; background: #101214; color: #d8dadc; border-bottom: 1px solid #777; }
.ptabs button { padding: 1px 4px 0; }
.ptabs .on, .btabs .on { background: linear-gradient(#fff, #ddd); color: #222; }
.tree { flex: 1; margin: 0 2px 0 4px; background: #fffaf0; font: 9px/12px "Liberation Sans", Arial, sans-serif; color: #222; }
.row { display: flex; align-items: center; height: 12px; white-space: nowrap; gap: 2px; }
.row svg { width: 12px; height: 12px; }
.l1 { background: linear-gradient(#d8d4cc, #d8d4cc) 5px 0 / 1px 338px no-repeat; }
.l1 ul { padding-left: 13px; background: linear-gradient(#d8d4cc, #d8d4cc) 18px 0 / 1px calc(100% - 6px) no-repeat; }
.ex { width: 7px; height: 7px; margin: 0 2px; border: 1px solid #b4b0a8; background: #fffaf0; font: 8px/5px "Liberation Sans", sans-serif; display: flex; align-items: center; justify-content: center; }
.ln { width: 5px; height: 1px; margin: 0 0 0 6px; background: #d8d4cc; }
.btabs { display: flex; height: 20px; margin-top: 2px; padding: 1px 2px 2px; background: #121416; color: #c8cacc; }
.btabs button { padding: 1px 4px 0; margin-right: 2px; }
.btabs .on { padding: 1px 3px 0; }

.work { flex: 1; min-width: 0; margin-left: 5px; display: flex; flex-direction: column; }
.view { flex: 1; min-height: 0; margin-top: 3px; background: #fff; border: solid #6d6f72; border-width: 1px 2px 0 2px; }
.view svg { width: 100%; height: 100%; }
.vtabs { display: flex; align-items: center; height: 20px; background: #e5e5e5; border-top: 1px solid #222; border-bottom: 1px solid #bbb; }
.arr { padding: 0 3px 0 4px; }
.arr svg { width: 7px; height: 7px; }
.arr.end { margin-left: auto; padding-right: 6px; }
.vtab { position: relative; height: 18px; padding: 0 9px; color: #333; font-weight: 700; }
.vtab svg { position: absolute; left: 0; top: 0; width: 100%; height: 18px; }
.vtab span { position: relative; }
.side { width: 18px; padding: 1px 1px 0; display: flex; flex-direction: column; gap: 1px; flex: none; }
.vbar { display: flex; flex-direction: column; align-items: center; background: #e9e9eb; border-top: 2px dotted #999; padding: 4px 0 3px; }
.vbar button { height: 15px; padding: 1px; }
.vbar hr { width: 9px; height: 1px; margin: 3px 0; border: 0; background: #666; }

footer { display: flex; align-items: center; height: 16px; padding-right: 18px; background: linear-gradient(#414d5e, #26303f 25%, #1f2937); color: #d4d8de; }
footer > span { padding-top: 2px; }
.msg { flex: 1; }
footer > .msg { padding-left: 4px; }
.c1 { width: 84px; }
.c2 { width: 134px; }
.units { display: flex; align-items: stretch; gap: 1px; width: 247px; height: 15px; background: #e6e6e6; color: #222; flex: none; padding: 1px; }
.units button { width: 15px; padding: 1px; background: #fff; border: 1px solid #ccc; }
.units button.off { background: #ddd; }
.units button svg { width: 11px; height: 11px; }
.units .key { width: 20px; padding-left: 4px; }
.units .sw { background: #0ff; width: 13px; }
.drop { display: flex; align-items: center; background: #fff; border: 1px solid #777; }
.w1 { width: 33px; } .w2 { width: 28px; }
.drop select { flex: 1; min-width: 0; appearance: none; height: 11px; line-height: 11px; overflow: hidden; text-overflow: clip; }
.drop i { border: 3px solid transparent; border-top: 4px solid #222; border-bottom: 0; margin: 0 3px; }
.num { display: flex; align-items: center; background: #fff; flex: 1; }
.num input { flex: 1; min-width: 0; width: 0; text-align: center; }
.num.off { background: #e2e2e2; color: #777; flex: none; width: 22px; }
.num svg { width: 11px; height: 12px; }
.units b { font-weight: 400; padding: 0 3px; }
```
FILE: model.js
```js
(function () {
  var svg = document.getElementById('model'), out = '';
  var TEAL = '#15807f', K = -0.2487, LEN = 768, SEG = LEN / 58;

  function path(d, fill, stroke, w) {
    out += '<path d="' + d + '" fill="' + (fill || 'none') + '" stroke="' + (stroke || 'none') + '" stroke-width="' + (w || 1) + '"/>';
  }
  function strip(x, y, a, b, fill) {
    path('M' + x + ' ' + (y + a) + 'l' + LEN + ' ' + (K * LEN) + 'v' + (b - a) + 'l' + (-LEN) + ' ' + (-K * LEN) + 'z', fill);
  }
  function edge(x, y, a, w) {
    path('M' + x + ' ' + (y + a) + 'l' + LEN + ' ' + (K * LEN), 'none', TEAL, w);
  }

  function pile(x, top, bottom, w) {
    path('M' + (x - w / 2) + ' ' + top + 'V' + bottom + 'q' + w / 2 + ' 2 ' + w + ' 0V' + top + 'z', '#b2d6f4', '#6f9fc2', .8);
    path('M' + (x + w / 2 - 1) + ' ' + top + 'V' + bottom, 'none', '#7397b6', 1);
    var d = '';
    for (var y = top + 4; y < bottom; y += 6.7) d += 'M' + (x - w / 2) + ' ' + y + 'q' + w / 2 + ' 1.600 ' + w + ' 0';
    path(d, 'none', '#35697c', .9);
  }

  function pier(dx, dy) {
    out += '<g transform="translate(' + dx + ' ' + dy + ')">';
    [[592.7, 480, 609, 5], [606.3, 488, 611, 5], [626, 492, 614, 5], [631, 490, 618, 5], [647, 490, 617, 5],
     [660.7, 486, 618, 5], [638, 492, 624, 5], [621, 494, 624, 5], [616, 494, 629, 5.5]].forEach(function (p) {
      pile(p[0], p[1], p[2], p[3]);
    });
    path('M586 474L638 461L667 485L618 497.500z', '#d8f6f2', TEAL, 1);
    var d = '', i, t;
    for (i = 1; i < 12; i++) {
      t = i / 12;
      d += 'M' + (586 + 32 * t) + ' ' + (474 + 23.5 * t) + 'L' + (638 + 29 * t) + ' ' + (461 + 24 * t);
      d += 'M' + (586 + 52 * t) + ' ' + (474 - 13 * t) + 'L' + (618 + 49 * t) + ' ' + (497.5 - 12.5 * t);
    }
    path(d, 'none', '#16978c', .7);
    path('M616.500 352V481q10 6 20 0V352z', '#a6cef0', '#4b86ac', .8);
    path('M633 352V483l4-2V352z', '#7aa5cb');
    d = '';
    for (i = 356; i < 482; i += 4.2) d += 'M616.500 ' + i + 'q10 3 20.500 0';
    path(d, 'none', '#336d8a', .9);
    path('M615 344l21-4v11l-2 2.500H615z', '#a9cff2', '#2b8291', 1);
    path('M632 340l4.500-1v13l-3 2z', '#7aa8d0');
    out += '</g>';
  }

  pier(0, 0);
  pier(318, -79.5);

  for (var r = 0; r < 4; r++) {
    var x = 403 - r, y = 323 + 20 * r, i, d = '';
    strip(x, y, -1, 3, '#d3f5f3');
    strip(x, y, 2.5, 15.5, '#8ba3c5');
    strip(x, y, 15, 16.5, '#c9f1ef');
    for (i = 0; i <= 58; i++) d += 'M' + (x + i * SEG) + ' ' + (y + 1 + i * SEG * K) + 'v14.500';
    path(d, 'none', '#397b8e', .7);
    edge(x, y, 0, .9);
    edge(x, y, 2.8, .4);
    edge(x, y, 15.5, .8);
    if (r < 3) {
      strip(x, y, 16, 18, '#fff');
      edge(x, y, 18, .4);
      for (i = 0; i < 19; i++) {
        var cx = 427.3 - r * 1.6 + i * 39.72, cy = y + (cx - x) * K;
        path('M' + cx + ' ' + cy + 'l5-1v19.500l-5 1z', '#d0f7f5');
        path('M' + cx + ' ' + cy + 'v19.500M' + (cx + 5) + ' ' + (cy - 1) + 'v19.500', 'none', TEAL, .8);
        path('M' + (cx + 3) + ' ' + cy + 'v19.500', 'none', '#3fa9a8', .6);
      }
    }
  }
  path('M632 325l4-3M635 321v4M953 243l4-1', 'none', '#0e5f5f', 1.5);
  out += '<ellipse cx="682" cy="313" rx="6" ry="4" fill="#58d8cf"/><path d="M677 311q5-5 10 0" fill="#d6f7f2" stroke="#3a9d9a"/>';
  svg.innerHTML = out;
})();
```
